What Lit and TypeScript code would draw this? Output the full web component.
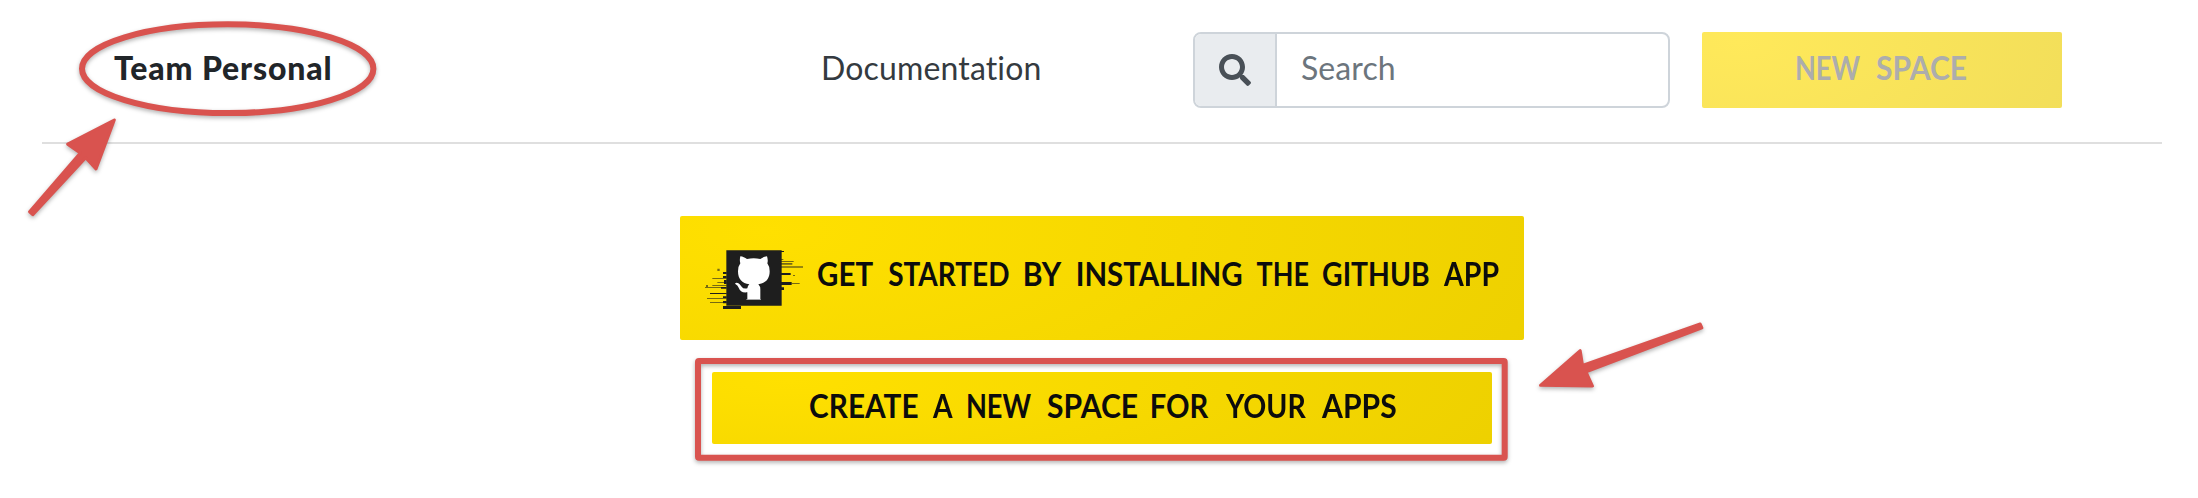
import { LitElement, html, css } from "lit";
import { customElement, property } from "lit/decorators.js";
import { styleMap } from "lit/directives/style-map.js";

// [text, gap before, drawn width, horizontal scale, left side bearing]
type Word = [string, number, number, number, number];

const NEW_SPACE: Word[] = [
  ["NEW", 0, 64, 0.85, 2.5],
  ["SPACE", 16, 90, 0.94, 1],
];

const INSTALL: Word[] = [
  ["GET", 0, 55, 0.92, 1],
  ["STARTED", 16, 120, 0.875, 1],
  ["BY", 16, 37, 0.94, 2.5],
  ["INSTALLING", 16, 164, 0.92, 2.5],
  ["THE", 15, 51, 0.84, 0.5],
  ["GITHUB", 15, 105, 0.885, 1],
  ["APP", 16, 55, 0.89, 0],
];

const CREATE: Word[] = [
  ["CREATE", 0, 108, 0.93, 1],
  ["A", 15, 20, 0.88, 0],
  ["NEW", 15, 64, 0.85, 2.5],
  ["SPACE", 16, 90, 0.94, 1],
  ["FOR", 14, 57, 0.91, 2.5],
  ["YOUR", 17, 80, 0.89, 0],
  ["APPS", 16, 74, 0.94, 0],
];

@customElement("caps-label")
class CapsLabel extends LitElement {
  @property({ attribute: false }) words: Word[] = [];

  static styles = css`
    :host {
      display: flex;
      font: 700 32px/40px Lato, "Liberation Sans", sans-serif;
      white-space: nowrap;
    }
    .word {
      flex: none;
    }
    .glyphs {
      display: block;
      width: max-content;
      transform-origin: 0 50%;
    }
  `;

  render() {
    return this.words.map(
      ([text, gap, width, scale, bearing]) => html`<span
        class="word"
        style=${styleMap({ marginLeft: `${gap}px`, width: `${width}px` })}
        ><span
          class="glyphs"
          style=${styleMap({ transform: `scaleX(${scale}) translateX(${-bearing}px)` })}
          >${text}</span
        ></span
      >`
    );
  }
}

@customElement("app-root")
class AppRoot extends LitElement {
  static styles = css`
    :host {
      display: block;
      position: relative;
      height: 498px;
      overflow: hidden;
      background: #fff;
      color: #212529;
      font: 400 32px/40px Lato, "Liberation Sans", sans-serif;
    }
    .bar {
      box-sizing: border-box;
      display: flex;
      align-items: center;
      height: 144px;
      margin: 0 36px 0 42px;
      padding: 32px 100px 34px 72px;
      border-bottom: 2px solid #dfdfdf;
    }
    .team {
      flex: none;
      width: 707px;
      padding-bottom: 5px;
      font-weight: 900;
      letter-spacing: 0.85px;
    }
    .docs {
      flex: none;
      width: 372px;
      padding-bottom: 5px;
      color: #343a40;
      letter-spacing: 0.15px;
    }
    .search {
      box-sizing: border-box;
      flex: none;
      display: flex;
      width: 477px;
      height: 76px;
      border: 2px solid #ced4da;
      border-radius: 8px;
      overflow: hidden;
    }
    .addon {
      display: flex;
      align-items: center;
      justify-content: center;
      box-sizing: border-box;
      width: 82px;
      background: #e9ecef;
      border-right: 2px solid #ced4da;
    }
    .addon svg {
      display: block;
      width: 32px;
      height: 32px;
    }
    .placeholder {
      padding: 14px 0 0 24px;
      color: #6c757d;
      letter-spacing: 0.1px;
    }
    .btn {
      box-sizing: border-box;
      display: flex;
      align-items: center;
      justify-content: center;
      border-radius: 2px;
      color: #0c0c0c;
      background: radial-gradient(100% 250% at 10% 12.5%, #ffe000, #edd000);
    }
    .new {
      flex: none;
      width: 360px;
      height: 76px;
      margin-left: 32px;
      padding-bottom: 5px;
      color: #adadad;
      background: radial-gradient(100% 250% at 10% 12.5%, #ffe95a, #f2de5a);
    }
    .actions {
      display: flex;
      flex-direction: column;
      align-items: center;
      gap: 32px;
      padding: 72px 0 0 6px;
    }
    .install {
      width: 844px;
      height: 124px;
      justify-content: flex-start;
      padding-left: 20px;
    }
    .install caps-label {
      padding-bottom: 9px;
    }
    .logo {
      display: block;
      width: 110px;
      height: 70px;
      margin-right: 8px;
    }
    .create {
      width: 780px;
      height: 72px;
      padding: 0 0 5px 1px;
    }
    .marks {
      position: absolute;
      left: 0;
      top: 0;
      filter: drop-shadow(0 2px 2px rgba(0, 0, 0, 0.3));
    }
  `;

  render() {
    return html`
      <header class="bar">
        <div class="team">Team Personal</div>
        <div class="docs">Documentation</div>
        <div class="search">
          <span class="addon">
            <svg viewBox="0 0 512 512" fill="#495057">
              <path
                d="M505 442.7L405.3 343c-4.500-4.500-10.600-7-17-7H372c27.600-35.300 44-79.700 44-128C416 93.100 322.900 0 208 0S0 93.100 0 208s93.100 208 208 208c48.300 0 92.700-16.400 128-44v16.300c0 6.400 2.500 12.500 7 17l99.700 99.700c9.400 9.400 24.600 9.400 33.900 0l28.300-28.300c9.400-9.400 9.400-24.600.1-34zM208 336c-70.700 0-128-57.200-128-128 0-70.700 57.200-128 128-128 70.700 0 128 57.200 128 128 0 70.700-57.200 128-128 128z"
              />
            </svg>
          </span>
          <span class="placeholder">Search</span>
        </div>
        <div class="btn new"><caps-label .words=${NEW_SPACE}></caps-label></div>
      </header>
      <main class="actions">
        <div class="btn install">
          <svg class="logo" viewBox="90 129 330 210">
            <g fill="#1e1e1e">
              <path d="M169 151H335V317H169z" />
              <path
                d="M333 153h9v3h-9zM333 219h29v6h-29zM333 246h32v9h-32zM333 262h9v8h-9zM159 216h11v6h-11zM159 228h11v6h-11zM162 240h8v12h-8zM153 261h17v5h-17zM120 279h50v3h-50zM159 289h11v5h-11zM159 303h11v7h-11zM159 318h54v9h-54z"
              />
              <path
                opacity=".6"
                d="M333 183h38v3h-38zM333 189h34v5h-34zM333 199h66v4h-66zM127 234h43v3h-43zM142 246h28v3h-28zM127 255h43v3h-43zM105 261h50v3h-50zM111 294h59v3h-59zM120 306h50v3h-50zM142 206h7v7h-7zM108 255h6v7h-6zM365 249h24v3h-24zM333 177h7v3h-7zM369 225h6v3h-6z"
              />
            </g>
            <path
              fill="#fff"
              d="M211 169C218 170 225 173 231 177Q251 172 271 177C277 173 285 169 291 169Q295 181 292 190Q299 199 299 214C299 237 287 250 265 253Q271 259 271 268V298H232V277C217 279 210 273 206 263Q203 256 196 252Q194 248 200 248C208 249 211 255 215 260Q220 268 232 265Q233 257 238 253C216 250 204 237 204 214Q204 199 211 190Q208 181 211 169z"
            />
            <path fill="#fff" opacity=".5" d="M229 297H273V300H229z" />
          </svg>
          <caps-label .words=${INSTALL}></caps-label>
        </div>
        <div class="btn create"><caps-label .words=${CREATE}></caps-label></div>
      </main>
      <svg class="marks" width="2198" height="498" viewBox="0 0 2198 498">
        <g fill="none" stroke="#d9534f" stroke-width="6">
          <ellipse cx="227.700" cy="68.700" rx="145.700" ry="44.400" />
          <rect x="698" y="361" width="806.700" height="96.700" rx="1" />
        </g>
        <g fill="#d9534f" stroke="#d9534f" stroke-width="3" stroke-linejoin="round">
          <path d="M29.600 211.800L32.800 214.700L85.700 157.800L96 169L114.300 120L67.700 144.200L80.300 153z" />
          <path d="M1540.500 385.300L1580.200 350.700L1582.500 365.300L1700.200 324L1701.900 327.900L1586 371.800L1592.500 386z" />
        </g>
      </svg>
    `;
  }
}
